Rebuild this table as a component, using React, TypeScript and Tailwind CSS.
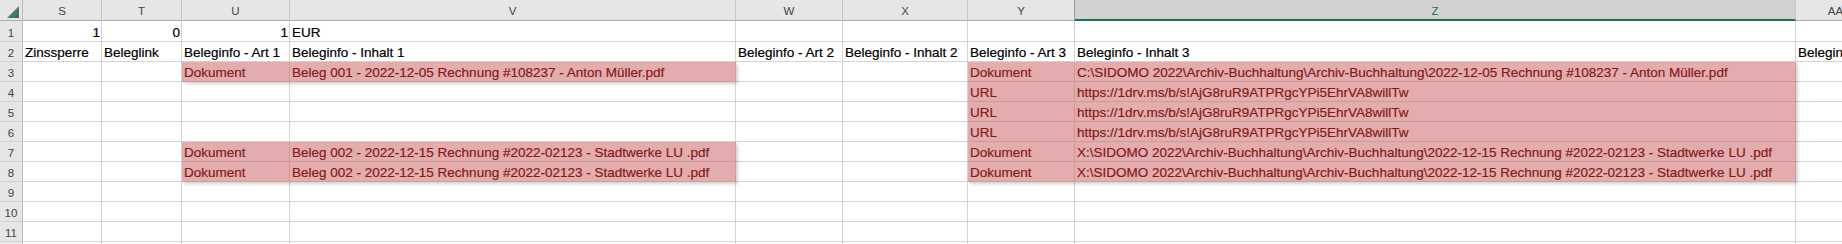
import React from "react";

type Cell = { t?: string; right?: boolean; pink?: boolean };

const COLS = ["S", "T", "U", "V", "W", "X", "Y", "Z", "AA"];

const P = (t: string): Cell => ({ t, pink: true });
const E: Cell = {};

const DOC1 = "Beleg 001 - 2022-12-05 Rechnung #108237 - Anton Müller.pdf";
const DOC2 = "Beleg 002 - 2022-12-15 Rechnung #2022-02123 - Stadtwerke LU .pdf";
const PATH1 =
  "C:\\SIDOMO 2022\\Archiv-Buchhaltung\\Archiv-Buchhaltung\\2022-12-05 Rechnung #108237 - Anton Müller.pdf";
const PATH2 =
  "X:\\SIDOMO 2022\\Archiv-Buchhaltung\\Archiv-Buchhaltung\\2022-12-15 Rechnung #2022-02123 - Stadtwerke LU .pdf";
const URL = "https://1drv.ms/b/s!AjG8ruR9ATPRgcYPi5EhrVA8willTw";

const rows: Cell[][] = [
  [{ t: "1", right: true }, { t: "0", right: true }, { t: "1", right: true }, { t: "EUR" }, E, E, E, E, E],
  [
    { t: "Zinssperre" },
    { t: "Beleglink" },
    { t: "Beleginfo - Art 1" },
    { t: "Beleginfo - Inhalt 1" },
    { t: "Beleginfo - Art 2" },
    { t: "Beleginfo - Inhalt 2" },
    { t: "Beleginfo - Art 3" },
    { t: "Beleginfo - Inhalt 3" },
    { t: "Beleginfo - Art 4" },
  ],
  [E, E, P("Dokument"), P(DOC1), E, E, P("Dokument"), P(PATH1), E],
  [E, E, E, E, E, E, P("URL"), P(URL), E],
  [E, E, E, E, E, E, P("URL"), P(URL), E],
  [E, E, E, E, E, E, P("URL"), P(URL), E],
  [E, E, P("Dokument"), P(DOC2), E, E, P("Dokument"), P(PATH2), E],
  [E, E, P("Dokument"), P(DOC2), E, E, P("Dokument"), P(PATH2), E],
  [E, E, E, E, E, E, E, E, E],
  [E, E, E, E, E, E, E, E, E],
  [E, E, E, E, E, E, E, E, E],
  [E, E, E, E, E, E, E, E, E],
];

function DataCell({ c, last }: { c: Cell; last: boolean }) {
  const base =
    "flex items-end whitespace-nowrap leading-[16px] text-[13.5px] px-[2px] border-r border-b [-webkit-text-stroke:0.2px_currentColor]";
  if (c.pink) {
    return (
      <div
        className={`${base} relative z-[1] overflow-hidden bg-[#e4adad] text-[#841a1a] border-[#d29b9b] shadow-[2px_2px_3px_rgba(0,0,0,0.18)]`}
      >
        {c.t}
      </div>
    );
  }
  return (
    <div
      className={`${base} ${last ? "overflow-visible" : "overflow-hidden"} ${
        c.right ? "justify-end pr-[1px]" : ""
      } bg-white text-black border-[#d4d4d4]`}
    >
      {c.t}
    </div>
  );
}

export default function App() {
  return (
    <div
      className="w-[1842px] h-[244px] overflow-hidden bg-white"
      style={{ fontFamily: '"Liberation Sans", Arial, sans-serif' }}
    >
      <div className="grid w-[1875px] grid-cols-[23px_79px_80px_108px_446px_107px_125px_107px_721px_80px]">
        {/* column headers */}
        <div className="relative h-[21px] bg-[#e6e6e6] border-r border-b border-r-[#bcbcbc] border-b-[#ababab]">
          <svg width="23" height="20" className="absolute left-0 top-0">
            <defs>
              <linearGradient id="tri" x1="0" y1="0" x2="1" y2="1">
                <stop offset="0" stopColor="#6f9a7c" />
                <stop offset="1" stopColor="#2f6b45" />
              </linearGradient>
            </defs>
            <polygon points="19,6 19,18 7,18" fill="url(#tri)" />
          </svg>
        </div>
        {COLS.map((k) =>
          k === "Z" ? (
            <div
              key={k}
              className="flex h-[21px] items-end justify-center pb-[1px] leading-[14px] text-[11.5px] bg-[#d2d2d2] text-[#217346] border-r border-b-2 border-r-[#c8c8c8] border-b-[#217346]"
            >
              {k}
            </div>
          ) : (
            <div
              key={k}
              className={`flex h-[21px] items-end justify-center pb-[2px] leading-[14px] text-[11.5px] bg-[#e6e6e6] text-[#444] border-r border-b border-b-[#ababab] ${
                k === "Y" ? "border-r-[#9e9e9e]" : "border-r-[#c8c8c8]"
              }`}
            >
              {k}
            </div>
          )
        )}

        {/* rows */}
        {rows.map((r, i) => (
          <React.Fragment key={i}>
            <div
              className={`flex ${
                i === 0 ? "h-[21px]" : "h-[20px]"
              } items-end justify-center pb-[1px] leading-[14px] text-[11.5px] bg-[#e6e6e6] text-[#444] border-r border-b border-r-[#bcbcbc] border-b-[#cfcfcf]`}
            >
              {i < 11 ? i + 1 : ""}
            </div>
            {r.map((c, j) => (
              <DataCell key={j} c={c} last={j === r.length - 1} />
            ))}
          </React.Fragment>
        ))}
      </div>
    </div>
  );
}
